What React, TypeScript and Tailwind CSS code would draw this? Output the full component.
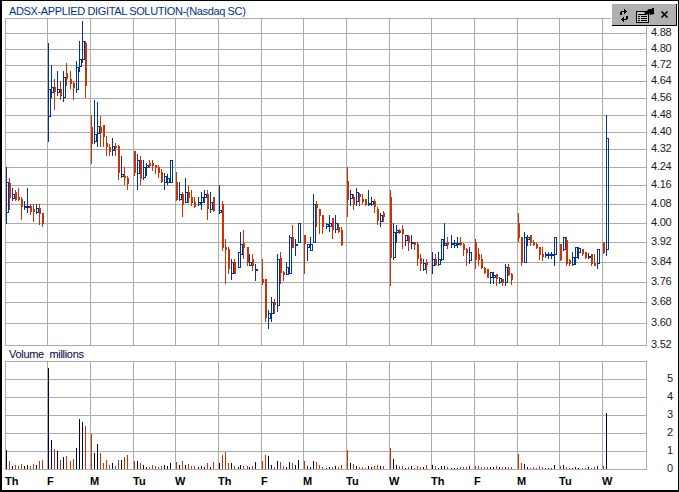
const B = 1, O = 0;
// x, high, low, body top, body bottom, up(blue)?, volume top
const bars: number[][] = [
[6,167,223,182,212,B,450],[9,178,209,183,197,O,461],[12,188,200,194,198,B,466],[15,190,200,192,199,O,465],[18,188,200,197,199,O,466],[21,197,219,199,206,O,464],[24,201,209,206,207,B,466],[27,188,212,206,207,B,465],[30,204,214,206,211,O,466],[33,204,221,209,211,O,464],[36,204,213,208,212,B,465],[39,204,224,208,213,O,461],[42,213,226,213,223,O,460],
[48,43,141,89,116,B,368],[51,65,97,87,92,B,440],[54,79,109,87,91,O,449],[57,71,95,89,92,B,451],[60,81,99,89,95,O,460],[63,71,101,77,97,B,457],[66,63,85,73,78,O,456],[70,71,88,79,83,O,461],[73,81,99,83,87,O,459],[76,61,92,67,89,B,448],[79,41,71,59,66,B,419],[82,21,62,41,59,B,422],[85,41,97,43,85,O,426],
[91,115,163,127,143,O,434],[94,100,143,134,141,B,453],[97,102,146,126,133,B,444],[100,116,146,127,132,O,453],[103,125,146,125,136,O,463],[106,136,155,143,146,O,460],[109,144,155,147,151,O,465],[112,138,155,146,150,B,463],[115,143,155,146,147,O,466],[118,145,179,146,172,O,460],[121,156,177,174,176,B,460],[124,167,184,176,177,O,457],[127,176,189,178,183,O,455],
[134,151,175,151,172,O,461],[137,154,189,160,173,B,461],[140,156,184,160,178,O,463],[143,160,179,167,177,B,465],[146,163,175,165,167,B,467],[149,160,167,163,165,O,467],[152,160,170,163,165,O,465],[155,165,173,165,167,O,466],[158,165,177,167,172,O,467],[161,169,182,172,181,O,466],[164,173,189,176,182,B,465],[167,174,184,178,182,B,466],[170,160,182,160,182,B,463],
[176,172,200,182,199,O,462],[179,182,200,194,199,B,465],[182,192,216,194,204,O,461],[185,178,202,192,202,B,465],[188,185,202,192,197,O,464],[191,190,205,197,202,O,466],[194,197,207,202,206,O,466],[198,197,205,202,204,B,467],[201,192,209,197,202,B,466],[204,190,202,194,197,B,467],[207,190,219,194,208,O,463],[210,192,212,202,209,B,467],[213,197,211,197,210,O,462],
[219,185,213,210,212,B,463],[222,201,250,204,247,O,455],[225,239,283,247,249,O,452],[228,247,273,249,268,O,463],[231,259,279,262,273,B,463],[234,259,273,262,273,O,466],[238,252,267,252,267,B,467],[240,232,260,244,254,B,465],[243,230,258,243,247,O,466],[247,247,265,247,262,O,466],[249,254,265,262,265,B,467],[252,254,270,259,265,O,466],[255,264,280,269,270,B,462],
[262,259,284,279,282,O,461],[265,279,321,279,317,O,455],[268,310,328,313,318,B,456],[271,297,321,302,313,B,465],[274,299,313,302,304,O,467],[277,254,311,259,305,B,461],[280,252,283,258,272,O,462],[283,271,280,272,274,O,466],[286,262,274,267,274,B,467],[289,235,273,237,273,B,462],[292,225,247,237,247,O,463],[295,239,255,244,245,B,465],[298,223,242,223,242,B,460],
[304,235,273,235,243,O,461],[307,244,260,244,247,B,466],[310,237,250,244,250,B,467],[313,194,242,204,242,B,461],[316,201,226,204,207,O,462],[319,209,233,209,215,O,465],[322,215,233,215,226,O,467],[326,223,228,224,226,B,468],[329,215,231,223,226,B,467],[332,218,238,218,229,O,467],[335,215,232,223,229,B,466],[338,223,232,227,231,O,467],[341,227,245,230,244,O,465],
[347,167,216,181,199,O,450],[350,190,205,194,198,B,463],[353,194,209,197,204,O,464],[356,188,205,192,201,B,466],[359,193,205,194,196,O,467],[362,194,203,199,201,O,467],[365,199,205,199,204,O,468],[368,190,205,203,204,B,466],[371,197,205,201,204,B,467],[374,199,212,201,206,O,466],[377,207,224,209,220,O,465],[380,213,226,215,221,B,466],[383,211,221,213,216,O,466],
[390,190,285,197,257,O,448],[393,223,259,232,257,B,459],[396,225,242,230,232,B,465],[399,229,233,230,232,O,466],[402,225,248,229,233,O,466],[405,235,245,235,240,B,468],[408,235,250,236,242,O,467],[411,235,248,242,243,B,466],[414,242,249,242,244,O,468],[417,242,265,244,258,O,466],[420,254,270,258,263,O,467],[423,259,270,263,269,B,467],[426,259,273,262,264,O,465],
[432,252,273,259,265,B,465],[435,254,265,259,264,O,466],[438,252,265,259,264,B,468],[441,239,260,239,259,B,466],[444,223,245,243,245,B,466],[447,237,248,242,244,O,467],[451,235,247,243,244,B,468],[454,240,247,243,245,B,468],[457,237,247,243,244,B,468],[460,237,245,242,244,O,467],[463,243,255,244,249,O,467],[466,248,265,249,252,O,467],[469,247,263,252,260,B,466],
[475,239,268,242,259,O,466],[478,248,265,254,259,O,466],[481,254,268,259,267,O,467],[484,267,273,268,272,O,467],[487,269,277,269,277,O,467],[490,272,283,272,277,B,467],[493,272,283,275,277,B,467],[496,274,285,274,278,O,466],[499,277,283,278,282,B,467],[502,279,285,279,282,O,467],[505,264,285,267,282,B,467],[508,264,275,267,274,O,467],[511,273,284,274,279,O,467],
[518,213,241,223,237,O,454],[521,237,265,237,262,O,463],[524,232,262,237,262,B,464],[527,235,245,237,239,B,467],[530,235,245,235,242,O,468],[533,240,245,242,244,O,467],[536,243,248,244,247,O,468],[539,247,259,247,254,O,466],[542,247,260,254,256,O,467],[545,252,257,254,255,B,468],[548,252,258,254,255,B,468],[551,252,258,254,255,B,468],[554,237,265,237,254,B,465],
[560,244,260,244,259,O,466],[563,237,250,237,249,B,465],[566,237,265,240,263,O,467],[569,259,265,260,263,O,468],[572,252,265,257,264,B,468],[575,247,264,247,257,B,467],[578,247,258,248,252,B,468],[582,249,255,249,253,O,468],[585,252,258,252,257,O,468],[588,253,258,256,257,B,467],[591,254,265,254,263,O,468],[594,254,265,263,265,O,467],[597,249,268,249,263,B,466],
[603,242,253,242,252,O,466],[606,115,255,138,249,B,413],
];

const vGrid = [47, 90, 133, 175, 218, 261, 303, 346, 389, 431, 474, 517, 559, 602];
const priceGrid = [33, 49, 65, 81, 98, 115, 132, 149, 167, 185, 204, 223, 242, 262, 282, 302, 323];
const priceLabels = ["4.88","4.80","4.72","4.64","4.56","4.48","4.40","4.32","4.24","4.16","4.08","4.00","3.92","3.84","3.76","3.68","3.60"];
const volGrid = [379, 397, 415, 433, 451];
const days = ["Th","F","M","Tu","W","Th","F","M","Tu","W","Th","F","M","Tu","W"];
const dayX = [5, ...vGrid];

function gridPath(top: number, bottom: number, rows: number[]) {
  const v = vGrid.map((x) => `M${x + 0.5} ${top}V${bottom}`).join("");
  const h = rows.map((y) => `M5 ${y + 0.5}H646`).join("");
  return `${v}${h}M5.5 ${top + 0.5}H646.5V${bottom + 0.5}H5.5Z`;
}

function PriceChart() {
  const blue = bars.filter((b) => b[5] === B).map(([x, hi, lo, t, b]) => `M${x + 0.5} ${hi}V${lo + 1}M${x + 0.5} ${t + 0.5}H${x + 2.5}V${b + 0.5}H${x + 0.5}`).join("");
  const orangeW = bars.filter((b) => b[5] === O).map(([x, hi, lo]) => `M${x + 0.5} ${hi}V${lo + 1}`).join("");
  const orangeF = bars.filter((b) => b[5] === O).map(([x, , , t, b]) => `M${x} ${t}H${x + 2}V${b + 1}H${x}Z`).join("");
  return (
    <svg width={676} height={333} viewBox="2 17 676 333" className="block shrink-0" shapeRendering="crispEdges">
      <path d={gridPath(18, 345, [...priceGrid, 345])} stroke="#acacac" fill="none" />
      <path d={blue} stroke="#003399" fill="none" />
      <path d={orangeW} stroke="#cc3300" fill="none" />
      <path d={orangeF} fill="#cc3300" />
      {priceLabels.map((l, i) => (
        <text key={l} x={651} y={priceGrid[i] + 3} className="fill-[#1a1a1a] text-[11px] tracking-[-0.25px]">{l}</text>
      ))}
      <text x={651} y={348} className="fill-[#1a1a1a] text-[11px] tracking-[-0.25px]">3.52</text>
    </svg>
  );
}

function VolumeChart() {
  return (
    <svg width={676} height={129} viewBox="2 361 676 129" className="block shrink-0" shapeRendering="crispEdges">
      <path d={gridPath(361, 469, volGrid)} stroke="#acacac" fill="none" />
      {bars.map((b) => (
        <line key={b[0]} x1={b[0] + 0.5} x2={b[0] + 0.5} y1={b[6]} y2={469} stroke={b[5] === B ? "#000040" : "#cc3300"} />
      ))}
      {[5, 4, 3, 2, 1, 0].map((n, i) => (
        <text key={n} x={667} y={382 + i * 18} className="fill-[#1a1a1a] text-[11px]">{n}</text>
      ))}
      {days.map((d, i) => (
        <text key={i} x={dayX[i]} y={485} className="fill-black text-[11px] font-bold">{d}</text>
      ))}
    </svg>
  );
}

function Toolbar() {
  return (
    <div className="absolute right-[2px] top-[2px] flex h-[22px] w-[65px] border-t border-l border-t-white border-l-white bg-[#b0b0b0] shadow-[1px_1px_0_#000]">
      <svg width={64} height={21} viewBox="0 0 64 21" className="block">
        <path
          shapeRendering="crispEdges"
          fill="#000"
          d="M12 5h1v1h-1zM12 6h2v1h-2zM9 7h6v1H9zM8 8h2v1H8zM12 8h2v1h-2zM8 9h2v1H8zM12 9h1v1h-1zM8 10h2v1H8zM14 12h2v3h-2zM11 13h1v1h-1zM10 14h2v1h-2zM9 15h6v1H9zM10 16h2v1h-2zM11 17h1v1h-1z"
        />
        <path shapeRendering="crispEdges" d="M24.5 7.5h9v1h3v10h-12z" fill="#c8c8c8" stroke="#000" />
        <path shapeRendering="crispEdges" d="M26 10.5h8M26 12.5h2M29 12.5h6M26 14.5h2M29 14.5h6M26 16.5h2M29 16.5h6" stroke="#000" />
        <path d="M32 9l5-4h3v-1l2 0v6l-4 1-1-2-2 2z" fill="#000" />
        <path d="M49.5 7.5l6 6M55.5 7.5l-6 6" stroke="#000" strokeWidth={1.7} fill="none" />
      </svg>
    </div>
  );
}

export default function App() {
  return (
    <div className="relative flex h-[492px] w-[679px] flex-col overflow-hidden border-t border-r border-b-2 border-l-2 border-black bg-white font-['Liberation_Sans',Arial,sans-serif]">
      <div className="flex h-[16px] shrink-0 items-center pl-[7px] pt-[4px] text-[11px] leading-none tracking-[-0.36px] text-[#003388]">
        ADSX-APPLIED DIGITAL SOLUTION-(Nasdaq SC)
      </div>
      <PriceChart />
      <div className="flex h-[11px] shrink-0 items-center pb-[2px] pl-[7px] text-[11px] leading-none tracking-[-0.3px] text-[#000040]">
        Volume&nbsp; millions
      </div>
      <VolumeChart />
      <Toolbar />
    </div>
  );
}
